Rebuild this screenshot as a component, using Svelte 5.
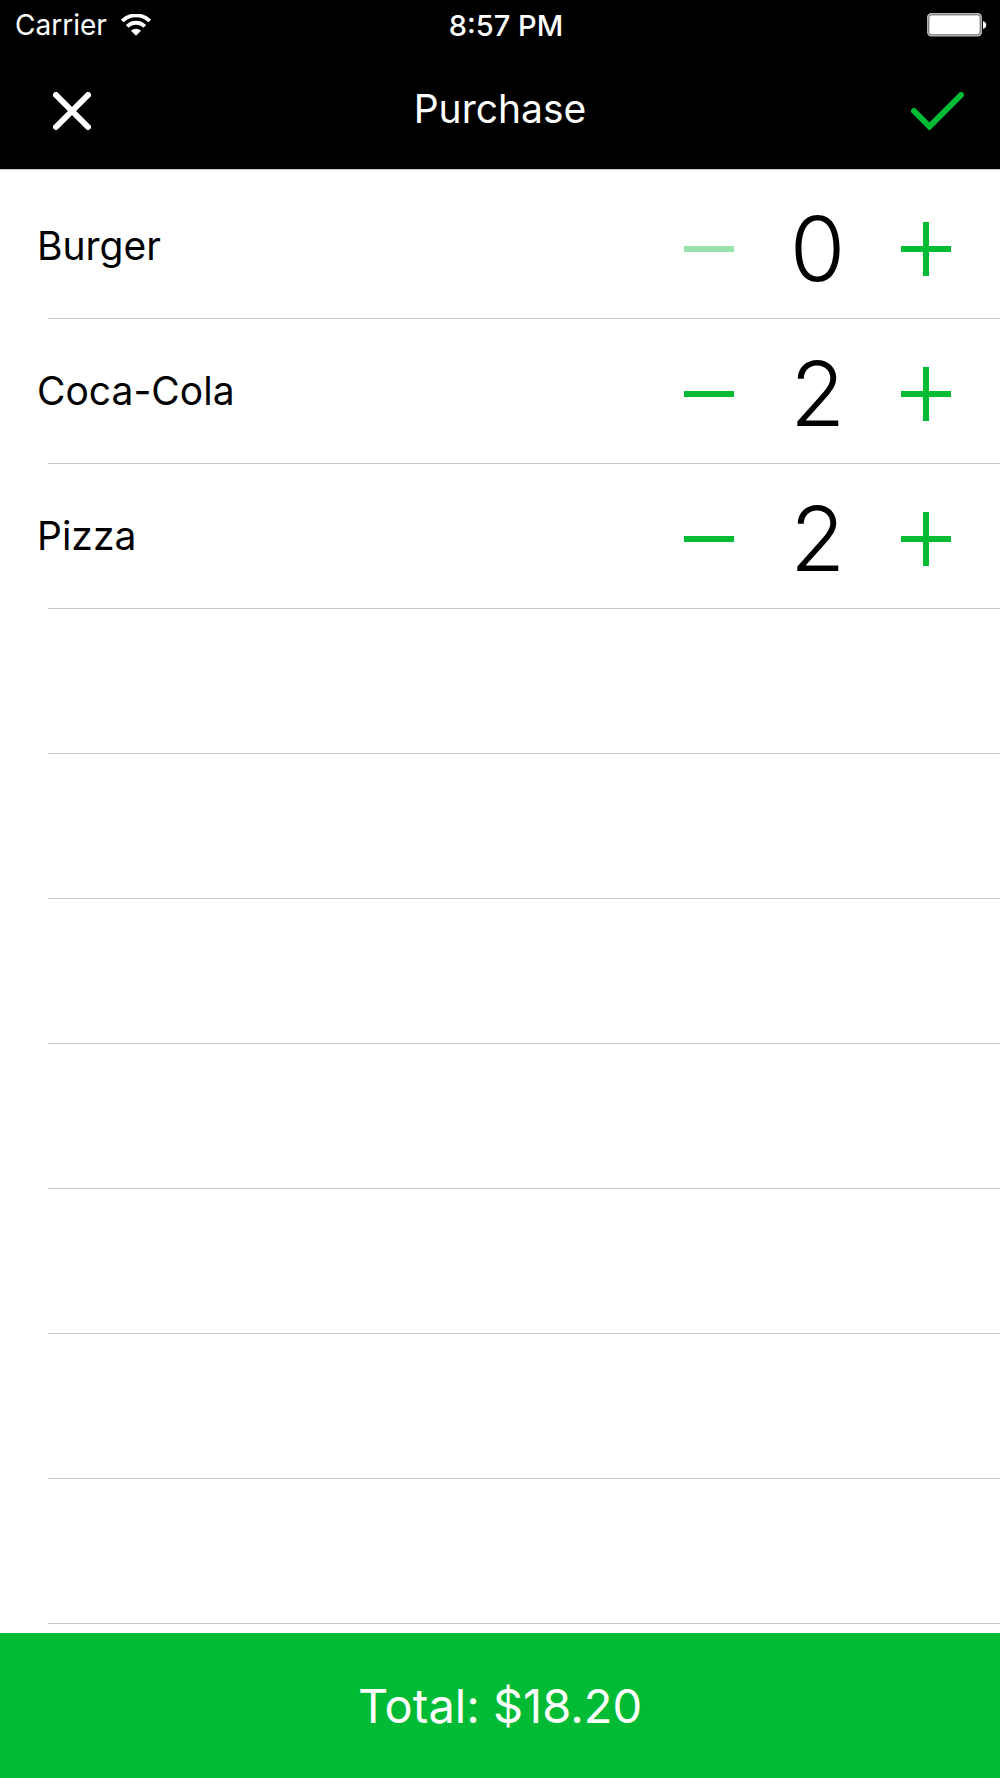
<script>
  let items = $state([
    { id: 'burger', name: 'Burger', price: 5.5, quantity: 0 },
    { id: 'cola', name: 'Coca-Cola', price: 1.6, quantity: 2 },
    { id: 'pizza', name: 'Pizza', price: 7.5, quantity: 2 }
  ]);
  const emptyRows = [1, 2, 3, 4, 5, 6, 7];

  const total = $derived(
    items.reduce((sum, item) => sum + item.price * item.quantity, 0).toFixed(2)
  );
</script>

<div class="screen">
  <header>
    <div class="status">
      <div class="carrier">
        <span>Carrier</span>
        <svg class="wifi" viewBox="0 0 30 22" aria-hidden="true">
          <path d="M1.200 7a19.500 19.500 0 0 1 27.600 0M6.200 12.400a12.400 12.400 0 0 1 17.600 0" fill="none" stroke="currentColor" stroke-width="3.800" />
          <path d="M9.900 16.800a7.200 7.200 0 0 1 10.200 0L15 21.800z" fill="currentColor" />
        </svg>
      </div>
      <time>8:57 PM</time>
      <svg class="battery" viewBox="0 0 60 24" aria-label="Battery full" role="img">
        <rect x="0.7" y="0.7" width="53.6" height="22.3" rx="3.6" fill="#fff" stroke="#bbb" stroke-width="1.2" />
        <rect x="1.8" y="1.8" width="51.4" height="20.1" rx="2.6" fill="#fff" stroke="#555" stroke-width="1" />
        <path d="M56 8c4.400 1.300 4.400 6.700 0 8z" fill="#fff" />
      </svg>
    </div>
    <nav>
      <button class="close" aria-label="Cancel">
        <svg viewBox="0 0 38 38"><path d="M3 3l32 32M35 3L3 35" /></svg>
      </button>
      <h1>Purchase</h1>
      <button class="confirm" aria-label="Confirm">
        <svg viewBox="0 0 54 38"><path d="M3 19l15.500 15.500L50 3" /></svg>
      </button>
    </nav>
  </header>

  <ul>
    {#each items as item (item.id)}
      <li>
        <span class="name">{item.name}</span>
        <div class="stepper">
          <button aria-label="Remove one {item.name}" disabled={item.quantity === 0} onclick={() => item.quantity--}>
            <svg viewBox="0 0 50 54"><path d="M0 27h50" /></svg>
          </button>
          <output>{item.quantity}</output>
          <button aria-label="Add one {item.name}" onclick={() => item.quantity++}>
            <svg viewBox="0 0 50 54"><path d="M0 27h50M25 0v54" /></svg>
          </button>
        </div>
      </li>
    {/each}
    {#each emptyRows as row (row)}
      <li aria-hidden="true"></li>
    {/each}
  </ul>

  <footer>Total: ${total}</footer>
</div>

<style>
  :global(body) {
    margin: 0;
    background: #fff;
  }

  .screen {
    display: flex;
    flex-direction: column;
    min-height: 100vh;
    color: #000;
    font-family: Inter, 'Liberation Sans', sans-serif;
  }

  header {
    background: #000;
    color: #fff;
    border-bottom: 1px solid #c8c7cc;
  }

  .status,
  nav {
    display: grid;
    grid-template-columns: 1fr auto 1fr;
    align-items: center;
  }

  .status {
    height: 50px;
    padding: 0 13px 0 15px;
    font-size: 28px;
  }

  .carrier {
    display: flex;
    align-items: center;
    gap: 14px;
  }

  .wifi {
    width: 30px;
    height: 22px;
  }

  time {
    padding-left: 10px;
    font-size: 29px;
    font-weight: 500;
  }

  .battery {
    justify-self: end;
    width: 60px;
    height: 24px;
  }

  nav {
    height: 119px;
    padding: 0 35px;
  }

  h1 {
    margin: 0;
    padding-bottom: 2px;
    font-size: 39px;
    font-weight: 400;
  }

  button {
    display: flex;
    padding: 0;
    border: 0;
    background: none;
    color: #00bb33;
    cursor: pointer;
  }

  svg {
    display: block;
  }

  button path {
    fill: none;
    stroke: currentColor;
    stroke-width: 6px;
  }

  nav button {
    padding-top: 3px;
  }

  .close {
    padding-left: 18px;
    color: #fff;
  }

  .close path,
  .confirm path {
    stroke-linecap: round;
  }

  .close svg {
    width: 38px;
    height: 38px;
  }

  .confirm {
    justify-self: end;
  }

  .confirm svg {
    width: 54px;
    height: 38px;
  }

  ul {
    flex: 1;
    margin: 0;
    padding: 4px 0 9px;
    list-style: none;
  }

  li {
    display: flex;
    align-items: center;
    justify-content: space-between;
    height: 144px;
    padding: 0 49px 0 37px;
    border-bottom: 1px solid;
    border-image: linear-gradient(to right, transparent 49px, #c8c7cc 49px) 1;
  }

  .name {
    padding-bottom: 2px;
    font-size: 39px;
  }

  .stepper {
    display: grid;
    grid-template-columns: 50px 167px 50px;
    align-items: center;
    padding-top: 6px;
  }

  .stepper svg {
    width: 50px;
    height: 54px;
  }

  .stepper button:disabled {
    opacity: 0.4;
  }

  output {
    font-size: 90px;
    font-weight: 300;
    line-height: 108px;
    text-align: center;
  }

  footer {
    display: flex;
    align-items: center;
    justify-content: center;
    height: 145px;
    background: #00bb33;
    color: #fff;
    font-size: 47px;
    font-weight: 400;
  }
</style>
